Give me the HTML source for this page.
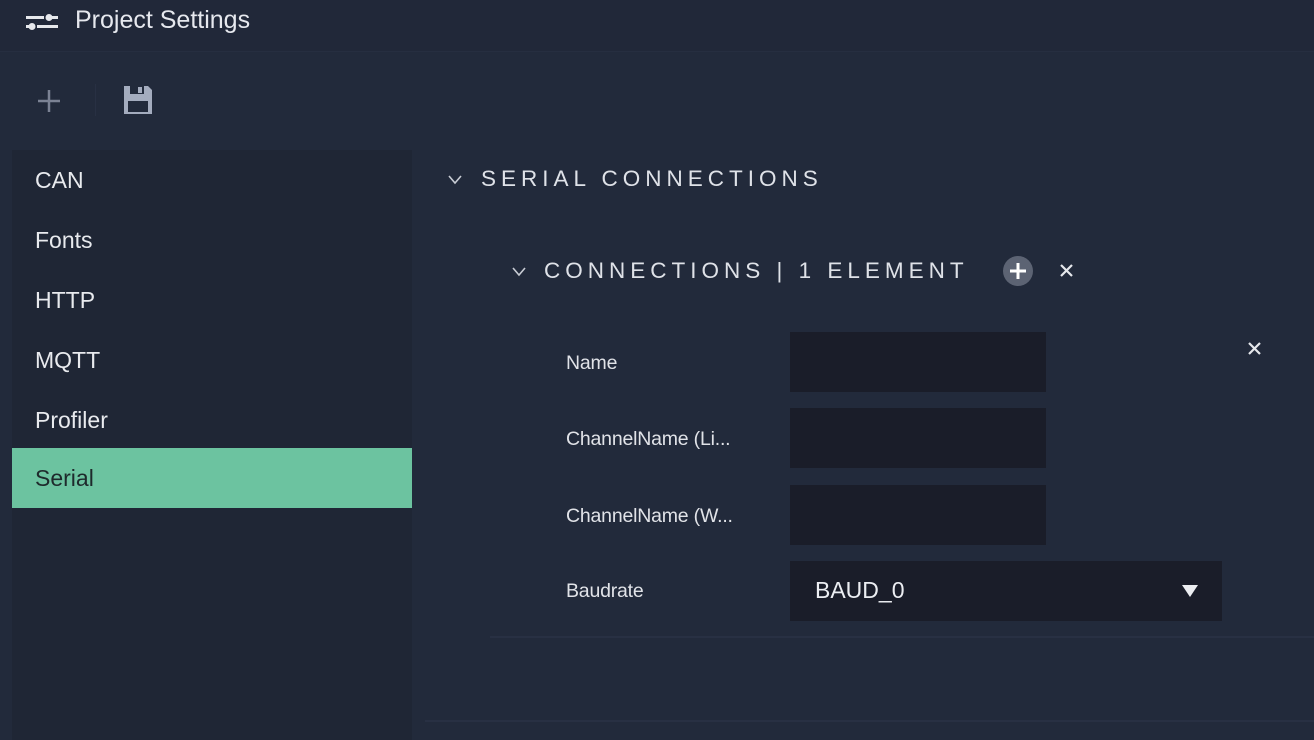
<!DOCTYPE html>
<html><head><meta charset="utf-8"><style>
*{margin:0;padding:0;box-sizing:border-box}
body{width:1314px;height:740px;background:#222a3b;font-family:"Liberation Sans",sans-serif;color:#e6e8ec;position:relative;overflow:hidden}
.abs{position:absolute}
.top{left:0;top:0;width:1314px;height:52px;background:#212839;border-bottom:1px solid #262e40}
.side{left:12px;top:150px;width:400px;height:590px;background:#1f2635}
.item{position:absolute;left:0;width:400px;height:60px;line-height:60px;padding-left:23px;font-size:23px;color:#e8eaee}
.sel{background:#6cc3a0;color:#1e2a2c}
.h{font-size:22.5px;letter-spacing:5px;color:#dfe2e8}
.lbl{font-size:19.5px;color:#e1e3e8;letter-spacing:-.2px}
.inp{background:#1a1d29;height:60px}
</style></head><body>
<div class="abs top"></div>
<svg class="abs" style="left:25px;top:10px" width="34" height="24" viewBox="0 0 34 24">
<rect x="1" y="6" width="18" height="3" fill="#e6e8ec"/><circle cx="24" cy="7.5" r="3.5" fill="#e6e8ec"/><rect x="24" y="6" width="9" height="3" fill="#e6e8ec"/>
<rect x="12" y="15" width="21" height="3" fill="#e6e8ec"/><circle cx="7" cy="16.5" r="3.5" fill="#e6e8ec"/><rect x="1" y="15" width="6" height="3" fill="#e6e8ec"/>
</svg>
<div class="abs" style="left:75px;top:6px;font-size:25px;color:#e6e8ee">Project Settings</div>
<svg class="abs" style="left:36px;top:88px" width="26" height="26"><path d="M13 2V24M2 13H24" stroke="#7b8294" stroke-width="2.5"/></svg>
<div class="abs" style="left:95px;top:84px;width:1px;height:32px;background:#283043"></div>
<svg class="abs" style="left:123px;top:85px" width="30" height="30" viewBox="0 0 30 30"><path d="M1 1H25L29 5V29H1Z" fill="#a4acbe"/><rect x="7" y="1" width="14" height="8" fill="#222a3b"/><rect x="15" y="2" width="4" height="6" fill="#a4acbe"/><rect x="5" y="16" width="20" height="11" fill="#222a3b"/></svg>
<div class="abs side">
<div class="item" style="top:0">CAN</div>
<div class="item" style="top:60px">Fonts</div>
<div class="item" style="top:120px">HTTP</div>
<div class="item" style="top:180px">MQTT</div>
<div class="item" style="top:240px">Profiler</div>
<div class="item sel" style="top:298px">Serial</div>
</div>
<svg class="abs" style="left:447px;top:174px" width="16" height="12"><path d="M2 2L8 9L14 2" stroke="#c8ccd4" stroke-width="1.6" fill="none"/></svg>
<div class="abs h" style="left:481px;top:166px">SERIAL CONNECTIONS</div>
<svg class="abs" style="left:511px;top:266px" width="16" height="12"><path d="M2 2L8 9L14 2" stroke="#c8ccd4" stroke-width="1.6" fill="none"/></svg>
<div class="abs h" style="left:544px;top:258px">CONNECTIONS | 1 ELEMENT</div>
<svg class="abs" style="left:1002px;top:255px" width="32" height="32"><circle cx="16" cy="16" r="15" fill="#5c6373"/><path d="M16 8V24M8 16H24" stroke="#fff" stroke-width="3"/></svg>
<svg class="abs" style="left:1059px;top:263px" width="15" height="15"><path d="M2 2L13 13M13 2L2 13" stroke="#e6e8ec" stroke-width="2.2"/></svg>
<svg class="abs" style="left:1247px;top:341px" width="15" height="15"><path d="M2 2L13 13M13 2L2 13" stroke="#e6e8ec" stroke-width="2.2"/></svg>
<div class="abs lbl" style="left:566px;top:352px">Name</div>
<div class="abs lbl" style="left:566px;top:428px">ChannelName (Li...</div>
<div class="abs lbl" style="left:566px;top:505px">ChannelName (W...</div>
<div class="abs lbl" style="left:566px;top:580px">Baudrate</div>
<div class="abs inp" style="left:790px;top:332px;width:256px"></div>
<div class="abs inp" style="left:790px;top:408px;width:256px"></div>
<div class="abs inp" style="left:790px;top:485px;width:256px"></div>
<div class="abs inp" style="left:790px;top:561px;width:432px"></div>
<div class="abs" style="left:815px;top:577px;font-size:23px;color:#eceef2">BAUD_0</div>
<svg class="abs" style="left:1181px;top:584px" width="18" height="14"><path d="M1 1H17L9 13Z" fill="#eceef2"/></svg>
<div class="abs" style="left:490px;top:636px;width:824px;height:2px;background:#283043"></div>
<div class="abs" style="left:425px;top:720px;width:889px;height:2px;background:#283043"></div>
</body></html>
